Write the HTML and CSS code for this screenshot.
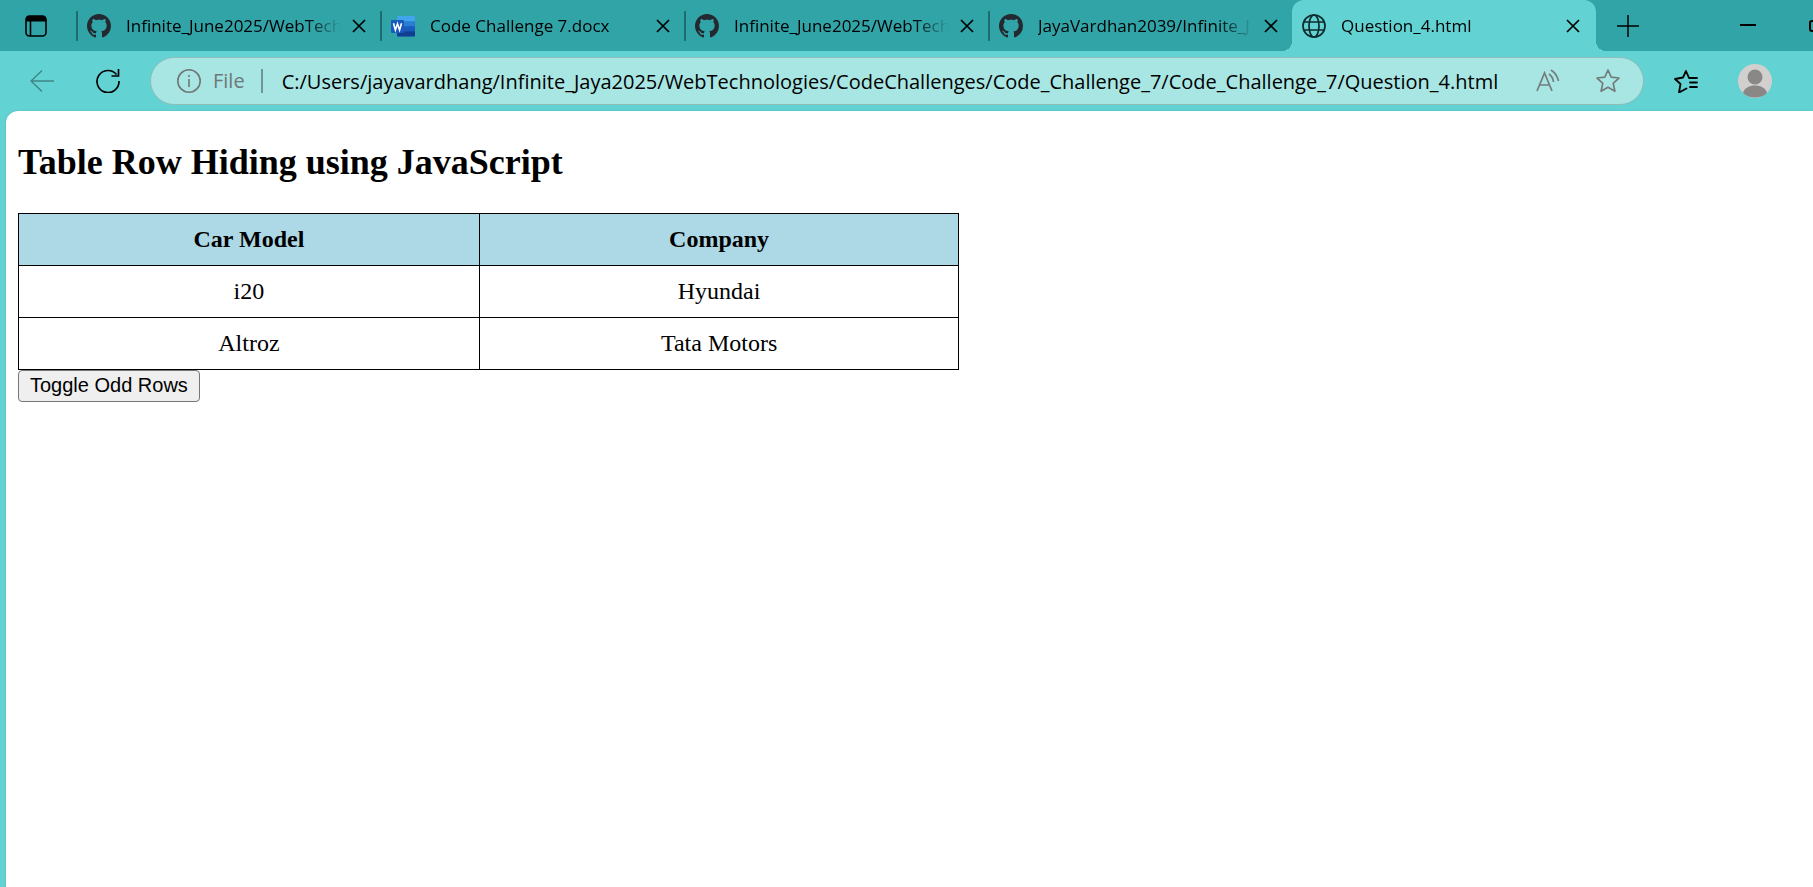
FILE: index.html
```html
<!DOCTYPE html>
<html lang="en">
<head>
<meta charset="utf-8">
<title>Question_4.html</title>
<link rel="stylesheet" href="styles.css">
</head>
<body class="window">
<svg class="defs" aria-hidden="true">
  <symbol id="github" viewBox="0 0 16 16"><path fill="#24292f" d="M8 0C3.58 0 0 3.58 0 8c0 3.54 2.29 6.53 5.47 7.59.4.07.55-.17.55-.38 0-.19-.01-.82-.01-1.49-2.01.37-2.53-.49-2.69-.94-.09-.23-.48-.94-.82-1.13-.28-.15-.68-.52-.01-.53.63-.01 1.08.58 1.23.82.72 1.21 1.87.87 2.33.66.07-.52.28-.87.51-1.07-1.78-.2-3.64-.89-3.64-3.95 0-.87.31-1.59.82-2.15-.08-.2-.36-1.02.08-2.12 0 0 .67-.21 2.2.82.64-.18 1.32-.27 2-.27s1.36.09 2 .27c1.53-1.04 2.2-.82 2.2-.82.44 1.1.16 1.92.08 2.12.51.56.82 1.27.82 2.15 0 3.07-1.87 3.75-3.65 3.95.29.25.54.73.54 1.48 0 1.07-.01 1.93-.01 2.2 0 .21.15.46.55.38A8.01 8.01 0 0 0 16 8c0-4.42-3.58-8-8-8z"/></symbol>
  <symbol id="close" viewBox="0 0 14 14"><path d="M1 1l12 12M13 1L1 13" fill="none" stroke="#000" stroke-width="1.7"/></symbol>
</svg>

<header class="tabstrip">
  <button class="tab-actions" aria-label="Tab actions">
    <svg width="22" height="22" viewBox="0 0 22 22"><rect x="1" y="1" width="20" height="20" rx="3.5" fill="none" stroke="#000" stroke-width="1.6"/><path d="M1 6.500V4a3 3 0 0 1 3-3h14a3 3 0 0 1 3 3v2.500z" fill="#000"/><path d="M5.500 6v15" stroke="#000" stroke-width="1.6"/></svg>
  </button>
  <div class="tab">
    <svg class="favicon"><use href="#github"/></svg>
    <span class="title">Infinite_June2025/WebTech</span>
    <button class="close" aria-label="Close tab"><svg width="14" height="14"><use href="#close"/></svg></button>
  </div>
  <div class="tab">
    <svg class="favicon" viewBox="0 0 24 24"><rect x="6" y="2" width="18" height="20.500" rx="1" fill="#2b7cd3"/><path d="M6 7.300V3a1 1 0 0 1 1-1h16a1 1 0 0 1 1 1v4.300z" fill="#41a5ee"/><path d="M6 12.300h18v5H6z" fill="#185abd"/><path d="M6 17.300h18v4.200a1 1 0 0 1-1 1H7a1 1 0 0 1-1-1z" fill="#103f91"/><rect y="6" width="13" height="13" rx="1" fill="#185abd"/><path d="M2.500 9.200l1.900 6.800 2.100-6.300 2.100 6.300 1.900-6.800" fill="none" stroke="#fff" stroke-width="1.6"/></svg>
    <span class="title">Code Challenge 7.docx</span>
    <button class="close" aria-label="Close tab"><svg width="14" height="14"><use href="#close"/></svg></button>
  </div>
  <div class="tab">
    <svg class="favicon"><use href="#github"/></svg>
    <span class="title">Infinite_June2025/WebTech</span>
    <button class="close" aria-label="Close tab"><svg width="14" height="14"><use href="#close"/></svg></button>
  </div>
  <div class="tab">
    <svg class="favicon"><use href="#github"/></svg>
    <span class="title">JayaVardhan2039/Infinite_J</span>
    <button class="close" aria-label="Close tab"><svg width="14" height="14"><use href="#close"/></svg></button>
  </div>
  <div class="tab active">
    <svg class="favicon" viewBox="0 0 24 24" fill="none" stroke="#0c2b2c" stroke-width="1.7"><circle cx="12" cy="12" r="11"/><ellipse cx="12" cy="12" rx="5" ry="11"/><path d="M2 8h20M2 16h20"/></svg>
    <span class="title">Question_4.html</span>
    <button class="close" aria-label="Close tab"><svg width="14" height="14"><use href="#close"/></svg></button>
  </div>
  <button class="new-tab" aria-label="New tab"><svg width="22" height="22"><path d="M11 0v22M0 11h22" stroke="#000" stroke-width="1.5"/></svg></button>
  <div class="window-controls">
    <button aria-label="Minimize"><svg width="16" height="16"><path d="M0 7h16" stroke="#000" stroke-width="2"/></svg></button>
    <button class="maximize" aria-label="Maximize"><svg width="4" height="12"><rect x="1" y="1" width="13" height="10" rx="2" fill="none" stroke="#000" stroke-width="2"/></svg></button>
  </div>
</header>

<nav class="toolbar">
  <button aria-label="Back"><svg width="24" height="24" fill="none" stroke="#3f8788" stroke-width="1.5"><path d="M24 12H1M12 1.500L1 12l11 10.500"/></svg></button>
  <button class="reload" aria-label="Refresh"><svg width="24" height="24" fill="none" stroke="#000" stroke-width="1.7"><path d="M23 12A11 11 0 1 1 20.500 5.500M22.500 0v7h-7"/></svg></button>
  <div class="address">
    <svg class="info" width="24" height="24" fill="none" stroke="#6f7777" stroke-width="1.6"><circle cx="12" cy="12" r="11.200"/><path d="M12 10v8M12 6v2"/></svg>
    <label class="scheme" for="url">File</label>
    <input class="url" id="url" type="text" value="C:/Users/jayavardhang/Infinite_Jaya2025/WebTechnologies/CodeChallenges/Code_Challenge_7/Code_Challenge_7/Question_4.html">
    <button aria-label="Read aloud"><svg width="24" height="24" fill="none" stroke="#747d7d" stroke-width="1.7"><path d="M1 22L8.500 4 16 22M4 16h9M13 5q4 3 4.500 8M15 1q6 4 7.500 11"/></svg></button>
    <button aria-label="Add to favorites"><svg width="24" height="24" fill="none" stroke="#747d7d" stroke-width="1.7" stroke-linejoin="round"><path d="M12 1l3.200 7.200 7.800.8-5.800 5.300 1.700 7.900L12 18.200l-6.900 4 1.700-7.900L1 9l7.800-.8z"/></svg></button>
  </div>
  <button class="favorites" aria-label="Favorites"><svg width="24" height="24" fill="none" stroke="#000" stroke-width="1.8" stroke-linejoin="round" stroke-linecap="round"><path d="M16 9h-1L12 2 9 8.500 1 10l5.500 5L5 23.500l7.500-4M16 9h7M16 13.500h7M16 18h7"/></svg></button>
  <button class="profile" aria-label="Profile"><svg width="34" height="34"><circle cx="17" cy="17" r="17" fill="#d2d0ce"/><circle cx="17" cy="13" r="7.500" fill="#8a8886"/><path d="M5 29c2-10 22-10 24 0-6 6-18 6-24 0z" fill="#8a8886"/></svg></button>
</nav>

<main class="page">
  <h2 class="heading">Table Row Hiding using JavaScript</h2>
  <table class="cars">
    <thead><tr><th class="model">Car Model</th><th>Company</th></tr></thead>
    <tbody>
      <tr><td>i20</td><td>Hyundai</td></tr>
      <tr><td>Altroz</td><td>Tata Motors</td></tr>
    </tbody>
  </table>
  <button class="toggle">Toggle Odd Rows</button>
</main>
</body>
</html>
```

FILE: styles.css
```css
* { box-sizing: border-box; }

.window {
  margin: 0;
  min-height: 100vh;
  display: flex;
  flex-direction: column;
  overflow-x: hidden;
  background: #62d2d3;
  color: #000;
  font-family: "Open Sans", sans-serif;
}

.defs { display: none; }

.tabstrip button, .toolbar button {
  display: flex;
  flex: none;
  padding: 0;
  border: 0;
  background: none;
}

.tabstrip {
  display: flex;
  align-items: center;
  height: 51px;
  background: #31a4a8;
}

.tabstrip .tab-actions { width: 76px; padding-left: 25px; }

.tab {
  position: relative;
  display: flex;
  align-items: center;
  flex: 0 1 304px;
  min-width: 0;
  height: 30px;
  padding: 0 14px 0 9px;
  border-left: 2px solid #1f6c6f;
}

.favicon { flex: none; width: 24px; height: 24px; margin-right: 15px; }

.title {
  flex: 1;
  min-width: 0;
  overflow: hidden;
  white-space: nowrap;
  font-size: 17px;
  line-height: 24px;
  mask-image: linear-gradient(to right, #000 calc(100% - 36px), transparent);
}

.tabstrip .close { margin-left: 11px; }

.tab.active {
  height: 51px;
  border-left: 0;
  padding: 0 16px 0 10px;
  border-radius: 12px 12px 0 0;
  background: #62d2d3;
}

.tab.active::before, .tab.active::after {
  content: "";
  position: absolute;
  bottom: 0;
  width: 10px;
  height: 10px;
}
.tab.active::before { right: 100%; background: radial-gradient(circle at 0 0, transparent 10px, #62d2d3 10px); }
.tab.active::after { left: 100%; background: radial-gradient(circle at 100% 0, transparent 10px, #62d2d3 10px); }

.tabstrip .new-tab { margin-left: 21px; }

.window-controls { display: flex; align-items: center; gap: 53px; margin-left: auto; }

.toolbar {
  display: flex;
  align-items: center;
  height: 60px;
  padding: 0 41px 0 30px;
}
.toolbar .reload { margin: 0 30px 0 42px; }

.address {
  display: flex;
  align-items: center;
  flex: 1;
  gap: 36px;
  min-width: 0;
  height: 48px;
  padding: 0 23px 0 26px;
  border: 1px solid #8dbcbc;
  border-radius: 24px;
  background: #a8e6e4;
}
.info { flex: none; margin-right: -24px; }
.scheme {
  padding-right: 16px;
  margin-right: -17px;
  border-right: 2px solid #6f9696;
  color: #6f7777;
  font-size: 20px;
  line-height: 24px;
}
.url {
  flex: 1;
  min-width: 0;
  padding: 2px 0 0;
  border: 0;
  outline: 0;
  background: none;
  color: #000;
  font: 20px/28px "Open Sans", sans-serif;
}

.toolbar .favorites { margin: 0 40px 0 30px; }

.page {
  flex: 1;
  margin-left: 6px;
  padding: 30px 12px;
  border-radius: 12px 0 0 0;
  background: #fff;
  box-shadow: 0 0 2px #4fb5b6;
  font-family: "Liberation Serif", serif;
}

.heading { margin: 0 0 30px; font-size: 36px; line-height: 42px; }

.cars {
  width: 52.8%;
  border-collapse: collapse;
  font-size: 24px;
  line-height: 27px;
  text-align: center;
}
.cars th, .cars td { padding: 12px; border: 1px solid #000; }
.cars th { background: #add8e6; }
.cars .model { width: 49%; }

.toggle {
  height: 32px;
  padding: 0 11px 2px;
  border: 1px solid #767676;
  border-radius: 4px;
  background: #efefef;
  color: #000;
  font: 20px/24px "Liberation Sans", sans-serif;
}
```
